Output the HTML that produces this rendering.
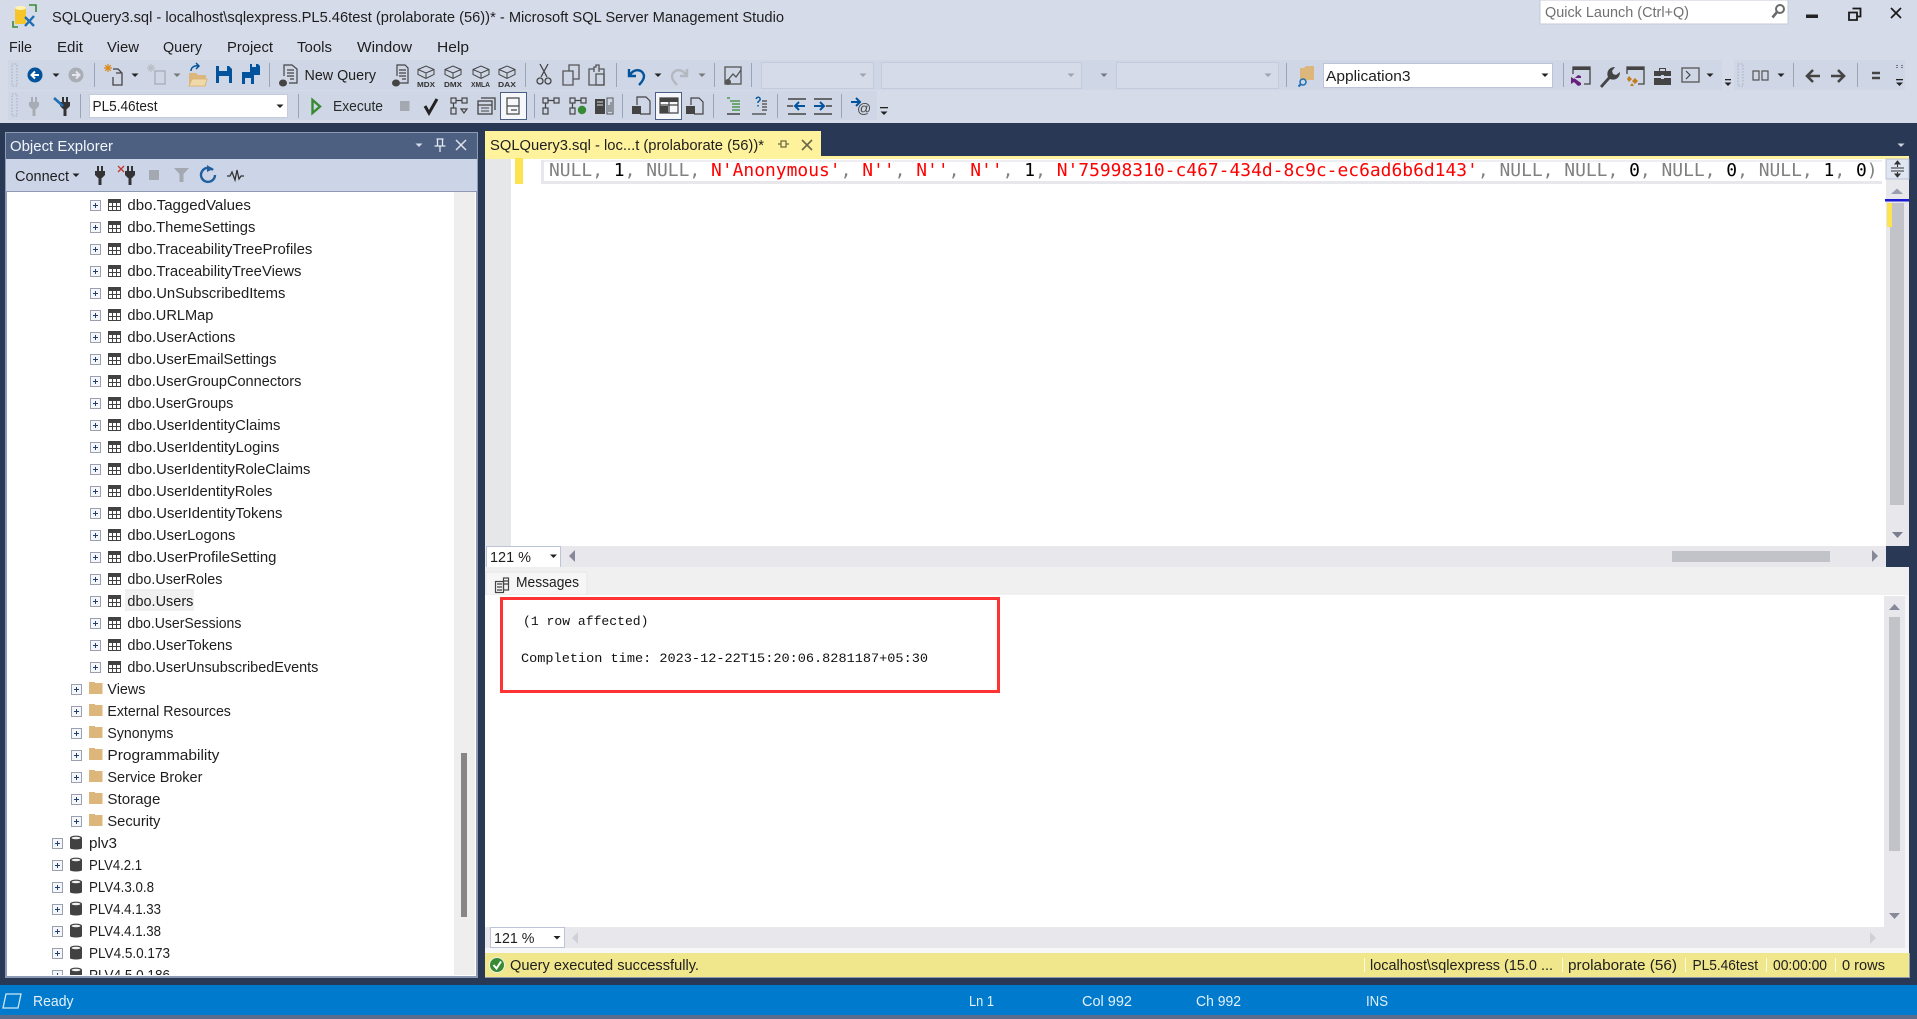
<!DOCTYPE html>
<html lang="en"><head><meta charset="utf-8"><title>SSMS</title>
<style>
html,body{margin:0;padding:0;width:1917px;height:1019px;overflow:hidden;background:#293955}
svg{display:block;position:absolute;left:0;top:0}
text{font-family:"Liberation Sans",sans-serif;font-size:15px;fill:#1e1e1e;white-space:pre}
.mono{font-family:"DejaVu Sans Mono",monospace;font-size:17.94px}
.msg{font-family:"Liberation Mono",monospace;font-size:13.3px;fill:#111}
.w{fill:#e4f1fb}
.tiny{font-family:"Liberation Sans",sans-serif;font-size:7.5px;font-weight:bold;fill:#333}
#rows text{transform:translateX(-.6px)}
</style></head><body>
<svg width="1917" height="1019" viewBox="0 0 1917 1019" xmlns="http://www.w3.org/2000/svg">
<defs>
<g id="exp"><rect x=".5" y=".5" width="10" height="10" fill="#f5f6fa" stroke="#9aa0ad"/><path d="M3 5.500h5M5.500 3v5" stroke="#1f3f73" stroke-width="1"/></g>
<g id="tbl"><rect x="0" y="0" width="13" height="12" fill="#fff"/><rect x="0" y="0" width="13" height="3" fill="#424242"/><path d="M.5 0v12M4.500 0v12M8.500 0v12M12.500 0v12M0 .5h13M0 3.500h13M0 7.500h13M0 11.500h13" stroke="#424242" stroke-width="1" fill="none"/></g>
<g id="fld"><rect x="0" y="1" width="13.500" height="11" fill="#dcb67a"/><rect x="0" y="0" width="6" height="2" fill="#dcb67a"/></g>
<g id="db"><path d="M0 3v10c0 2 12 2 12 0V3z" fill="#424242"/><ellipse cx="6" cy="3" rx="6" ry="2.400" fill="#424242"/><ellipse cx="6" cy="3" rx="4.400" ry="1.300" fill="#f2f2f2"/></g>
<path id="dd" d="M-3.500 -1.500h7l-3.500 3.500z"/>
<g id="sep"><rect width="1" height="24" fill="#9aa4b8"/></g>
<g id="cube"><path d="M1 4.500l8-3.500 8 3.500v5l-8 4-8-4zM1 4.500l8 3.500 8-3.500M9 8v5.500" fill="none" stroke="#444" stroke-width="1"/></g>
<g id="plug"><path d="M3 0v5M7 0v5" stroke="currentColor" stroke-width="2"/><path d="M0 5h10v4l-3 3H6.500v7h-3v-7H3L0 9z" fill="currentColor"/></g>
<clipPath id="tc"><rect x="7" y="192" width="447" height="783"/></clipPath>
</defs>

<!-- base -->
<rect width="1917" height="123" fill="#d6dbe9"/>
<rect y="123" width="1917" height="862" fill="#293955"/>

<!-- title -->
<path d="M13 21v6h5M29 5h7v7" stroke="#388a34" stroke-width="1.600" fill="none"/>
<path d="M15 8h11v16H15z" fill="#f5c52a"/><ellipse cx="20.500" cy="8" rx="5.500" ry="2" fill="#fff3b0"/>
<path d="M25 17l9 9M34 16l-9 10" stroke="#1f6fb5" stroke-width="2.400"/>
<text x="52" y="22" textLength="732" lengthAdjust="spacingAndGlyphs">SQLQuery3.sql - localhost\sqlexpress.PL5.46test (prolaborate (56))* - Microsoft SQL Server Management Studio</text>
<rect x="1540" y="0" width="248" height="24" fill="#fff" stroke="#c4cad8"/>
<text x="1545" y="17" textLength="144" lengthAdjust="spacingAndGlyphs" style="fill:#717171">Quick Launch (Ctrl+Q)</text>
<circle cx="1780" cy="9" r="4" fill="none" stroke="#6a6a6a" stroke-width="2"/><path d="M1777 12l-4.500 5.500" stroke="#6a6a6a" stroke-width="2.600"/>
<rect x="1806" y="14.500" width="12" height="3.500" fill="#222"/>
<path d="M1852.500 8.500h8v8h-3M1849 12.500h8v7.500h-8z" fill="#d6dbe9" stroke="#1a1a1a" stroke-width="1.800"/>
<path d="M1891 8l10 10M1901 8l-10 10" stroke="#1a1a1a" stroke-width="1.700"/>

<!-- menu -->
<g>
<text x="9" y="52" textLength="23" lengthAdjust="spacingAndGlyphs">File</text>
<text x="57" y="52" textLength="26" lengthAdjust="spacingAndGlyphs">Edit</text>
<text x="107" y="52" textLength="32" lengthAdjust="spacingAndGlyphs">View</text>
<text x="163" y="52" textLength="39" lengthAdjust="spacingAndGlyphs">Query</text>
<text x="227" y="52" textLength="46" lengthAdjust="spacingAndGlyphs">Project</text>
<text x="297" y="52" textLength="35" lengthAdjust="spacingAndGlyphs">Tools</text>
<text x="357" y="52" textLength="55" lengthAdjust="spacingAndGlyphs">Window</text>
<text x="437" y="52" textLength="32" lengthAdjust="spacingAndGlyphs">Help</text>
</g>

<!-- toolbar backgrounds -->
<rect x="8" y="60" width="1897" height="30" fill="#cfd6e5"/>
<rect x="8" y="91" width="869" height="29" fill="#cfd6e5"/>
<rect x="1722" y="60" width="12" height="30" fill="#d6dbe9"/>
<path d="M12 64h5v22h-5zM12 94h5v22h-5zM1738 64h5v22h-5z" fill="none" stroke="#a8afc0" stroke-width="1" stroke-dasharray="1.500 1.500"/>

<!-- toolbar 1 left -->
<circle cx="35" cy="75" r="7.500" fill="#00539c"/><path d="M39 75h-7M35 71.500l-3.500 3.500 3.500 3.500" stroke="#fff" stroke-width="2" fill="none"/>
<use href="#dd" x="56" y="75" fill="#222"/>
<circle cx="76" cy="75" r="7.500" fill="#a9adb5"/><path d="M72 75h7M76 71.500l3.500 3.500-3.500 3.500" stroke="#e4e6ec" stroke-width="2" fill="none"/>
<use href="#sep" x="94" y="63"/>
<g fill="none"><path d="M113 69h5l4 4v12h-9V77M116 73h5" stroke="#444" stroke-width="1.300"/><path d="M108 64v8M104 68h8M105.200 65.200l5.600 5.600M110.800 65.200l-5.600 5.600" stroke="#d98a1a" stroke-width="1.200"/></g>
<use href="#dd" x="135" y="75" fill="#222"/>
<g fill="none"><rect x="155" y="71" width="10" height="13" stroke="#a8acb4" stroke-width="1.300"/><path d="M151 64v8M147 68h8M148.200 65.200l5.600 5.600M153.800 65.200l-5.600 5.600" stroke="#b8bcc4" stroke-width="1.200"/></g>
<use href="#dd" x="177" y="75" fill="#777"/>
<path d="M189 73h7l2 2h8v11h-17z" fill="#dcb67a"/><path d="M189 86l3-7h15l-2 7z" fill="#efd9a8" stroke="#dcb67a"/><path d="M191 71c0-4 4-6 8-5M196 63l3 3-3 3" stroke="#00539c" stroke-width="1.500" fill="none"/>
<path d="M216 66h13l3 3v14h-16z" fill="#00539c"/><rect x="219" y="66" width="8" height="5" fill="#cfd6e5"/><rect x="219" y="76" width="10" height="7" fill="#cfd6e5"/>
<path d="M250 64h8l2 2v9h-10z" fill="#00539c"/><path d="M242 72h10l2 2v10h-12z" fill="#00539c"/><rect x="245" y="78" width="6" height="6" fill="#cfd6e5"/><rect x="252" y="64" width="4" height="3" fill="#cfd6e5"/>
<use href="#sep" x="269" y="63"/>
<g fill="none" stroke="#444" stroke-width="1.200"><path d="M284 76V65h8l5 4v14h-8"/><path d="M287 70h7M287 73h7M287 76h7M290 79h4"/></g><ellipse cx="283" cy="83" rx="4" ry="3.500" fill="#444"/>
<text x="304.500" y="80" textLength="71.500" lengthAdjust="spacingAndGlyphs">New Query</text>
<g fill="none" stroke="#444" stroke-width="1.200"><path d="M397 76V65h8l3 3v15h-8"/><path d="M399 70h7M399 73h7M399 76h7M402 79h4"/></g><ellipse cx="396" cy="83" rx="4" ry="3.500" fill="#444"/>
<use href="#cube" x="417" y="65"/><text class="tiny" x="417" y="87" textLength="18" lengthAdjust="spacingAndGlyphs">MDX</text>
<use href="#cube" x="444" y="65"/><text class="tiny" x="444" y="87" textLength="18" lengthAdjust="spacingAndGlyphs">DMX</text>
<use href="#cube" x="472" y="65"/><text class="tiny" x="471" y="87" textLength="19" lengthAdjust="spacingAndGlyphs">XMLA</text>
<use href="#cube" x="498" y="65"/><text class="tiny" x="498" y="87" textLength="18" lengthAdjust="spacingAndGlyphs">DAX</text>
<use href="#sep" x="525" y="63"/>
<g fill="none" stroke="#444" stroke-width="1.300"><path d="M540 64l7 13M548 64l-7 13"/><circle cx="540" cy="81" r="3"/><circle cx="548" cy="81" r="3"/></g>
<g fill="#cfd6e5" stroke="#555" stroke-width="1.300"><path d="M569 65h10v14h-10z"/><path d="M563 71h10v14h-10z"/></g>
<g fill="none" stroke="#555" stroke-width="1.300"><path d="M594 69h-5v16h15V69h-5"/><path d="M594 72v-5h2v-2h3v7M596 74h8v11h-8z"/></g>
<use href="#sep" x="616" y="63"/>
<path d="M629 69v7h7M630 75c4-7 13-6 14 1 0 4-3 7-5 9" fill="none" stroke="#00539c" stroke-width="2.400"/>
<use href="#dd" x="658" y="75" fill="#222"/>
<path d="M687 69v7h-7M686 75c-4-7-13-6-14 1 0 4 3 7 5 9" fill="none" stroke="#b4b8c0" stroke-width="2.400"/>
<use href="#dd" x="702" y="75" fill="#777"/>
<use href="#sep" x="714" y="63"/>
<g fill="none" stroke="#555" stroke-width="1.300"><rect x="725" y="67" width="16" height="17"/><path d="M728 80l5-6 3 3 5-7"/></g><circle cx="728" cy="82" r="3" fill="#555"/>
<use href="#sep" x="751" y="63"/>

<!-- disabled combos -->
<rect x="761.500" y="62.500" width="112" height="26" fill="#d6dbe9" stroke="#c3cbdc"/><use href="#dd" x="863" y="75" fill="#9ba3b3"/>
<rect x="881.500" y="62.500" width="200" height="26" fill="#d6dbe9" stroke="#c3cbdc"/><use href="#dd" x="1071" y="75" fill="#9ba3b3"/>
<use href="#dd" x="1104" y="75" fill="#717782"/>
<rect x="1116.500" y="62.500" width="162" height="26" fill="#d6dbe9" stroke="#c3cbdc"/><use href="#dd" x="1268" y="75" fill="#9ba3b3"/>
<use href="#sep" x="1286" y="63"/>

<!-- application combo -->
<path d="M1300 68h4l2-2h8v14h-14z" fill="#dcb67a"/><circle cx="1303" cy="82" r="3" fill="none" stroke="#1f6fb5" stroke-width="1.500"/><path d="M1300.500 84.500l-2 2" stroke="#1f6fb5" stroke-width="2"/>
<rect x="1323.500" y="63.500" width="229" height="24" fill="#fff" stroke="#bcc4d8"/>
<text x="1326" y="81" textLength="84.500" lengthAdjust="spacingAndGlyphs">Application3</text>
<use href="#dd" x="1545" y="75" fill="#222"/>
<use href="#sep" x="1563" y="63"/>
<g fill="none" stroke="#444" stroke-width="1.300"><path d="M1573 74v-7h17v17h-6"/><path d="M1573 68.500h17" stroke-width="3"/></g><path d="M1574 78l7 5v2l-3 1-4-4-3 2v-7l3 2 4-4 3 1v2z" fill="#68217a"/>
<path d="M1600 86l8-9c-2-5 1-10 7-10l-3 4 1 3 3 1 4-3c0 6-5 9-10 7l-8 9z" fill="#444"/>
<g fill="none" stroke="#444" stroke-width="1.300"><path d="M1627 74v-7h17v17h-6"/><path d="M1627 68.500h17" stroke-width="3"/></g><path d="M1629 76l3 3-3 3-2-3zM1635 78l3 3-3 3-3-3zM1632 83l2 3h-4z" fill="#c27d1a"/>
<path d="M1659 71v-3h7v3M1654 71h17v5h-17zM1654 78h17v7h-17z" fill="#444"/><path d="M1660 71v-2h5v2" fill="#cfd6e5"/><rect x="1661" y="75" width="3" height="4" fill="#cfd6e5"/>
<rect x="1682" y="68" width="17" height="14" fill="none" stroke="#555" stroke-width="1.300"/><path d="M1686 71l4 4-4 4" fill="none" stroke="#444" stroke-width="1.200"/>
<use href="#dd" x="1710" y="75" fill="#222"/>
<rect x="1725" y="79" width="6" height="1.300" fill="#222"/><use href="#dd" x="1728" y="84" fill="#222"/>
<g fill="none" stroke="#555" stroke-width="1.200"><path d="M1753 71h6v9h-6zM1762 71h6v9h-6z"/></g>
<use href="#dd" x="1781" y="75" fill="#222"/>
<use href="#sep" x="1793" y="63"/>
<path d="M1820 76h-12M1813 70l-6 6 6 6" fill="none" stroke="#444" stroke-width="2.600"/>
<path d="M1831 76h12M1838 70l6 6-6 6" fill="none" stroke="#444" stroke-width="2.600"/>
<use href="#sep" x="1857" y="63"/>
<path d="M1872 73h8M1872 78h8" stroke="#444" stroke-width="2.600"/>
<path d="M1897 65v4M1902 65v4" stroke="#444" stroke-width="1.300" stroke-dasharray="1 1"/>
<rect x="1896" y="79" width="7" height="1.300" fill="#222"/><use href="#dd" x="1899.500" y="84" fill="#222"/>

<!-- toolbar 2 -->
<g color="#a8acb4" transform="translate(29,97)"><use href="#plug"/></g>
<g color="#333" transform="translate(60,97)"><use href="#plug"/></g>
<path d="M54 98l9 8" stroke="#1f6fb5" stroke-width="2.600"/>
<use href="#sep" x="80" y="94"/>
<rect x="89.500" y="94.500" width="198" height="23" fill="#fff" stroke="#c4cbdd"/>
<text x="92.500" y="111" textLength="65" lengthAdjust="spacingAndGlyphs">PL5.46test</text>
<use href="#dd" x="280" y="106" fill="#222"/>
<use href="#sep" x="298" y="94"/>
<path d="M312.500 100v13l7.500-6.500z" fill="none" stroke="#388a34" stroke-width="2.400"/>
<text x="333" y="111" textLength="50" lengthAdjust="spacingAndGlyphs" style="fill:#2a2a2a">Execute</text>
<rect x="400" y="101" width="9.500" height="10" fill="#a4a8b0"/>
<path d="M425 106l4 7 8-14" fill="none" stroke="#222" stroke-width="3"/>
<g fill="none" stroke="#444" stroke-width="1.200"><rect x="451" y="98" width="5" height="5"/><rect x="462" y="98" width="5" height="5"/><path d="M456 100.500h6M453.500 103v5"/><rect x="451" y="108" width="5" height="6"/><path d="M461 109h6l-3 4z"/></g>
<g fill="none" stroke="#444" stroke-width="1.300"><rect x="478" y="101" width="14" height="13"/><path d="M481 98h14v12M478 105h14"/><path d="M481 108h8M481 111h8" stroke-width="1"/></g>
<rect x="500.500" y="92.500" width="26" height="27" fill="#f6f7fa" stroke="#4a5f85"/>
<g fill="none" stroke="#444" stroke-width="1.200"><rect x="507" y="98" width="12" height="16"/><path d="M507 106h12M511 110h6"/></g>
<use href="#sep" x="534" y="94"/>
<g fill="none" stroke="#444" stroke-width="1.200"><rect x="543" y="98" width="5" height="5"/><rect x="554" y="98" width="5" height="5"/><path d="M548 100.500h6M545.500 103v5"/><rect x="543" y="108" width="5" height="6"/></g>
<g fill="none" stroke="#444" stroke-width="1.200"><rect x="570" y="98" width="5" height="5"/><rect x="581" y="98" width="5" height="5"/><path d="M575 100.500h6M572.500 103v5"/><rect x="570" y="108" width="5" height="6"/></g><circle cx="582" cy="110" r="4.200" fill="#388a34"/>
<g><rect x="595" y="99" width="10" height="15" fill="#444"/><path d="M597 102h6M597 105h6" stroke="#ddd"/><path d="M607 98h6v16h-6zM609 105v7M611 102v10" fill="none" stroke="#555"/></g>
<use href="#sep" x="622" y="94"/>
<g fill="none" stroke="#444" stroke-width="1.200"><path d="M637 105V97h9l4 4v13h-10"/></g><rect x="632" y="106" width="9" height="8" fill="#444"/>
<rect x="655.500" y="92.500" width="26" height="27" fill="#f6f7fa" stroke="#4a5f85"/>
<g><rect x="660" y="98" width="18" height="4" fill="#444"/><path d="M660 98h18v15h-18zM660 105h18M669 98v15" fill="none" stroke="#444" stroke-width="1.200"/><rect x="660" y="106" width="8" height="7" fill="#444"/></g>
<g fill="none" stroke="#444" stroke-width="1.200"><path d="M691 105V98h8l4 4v12h-9"/></g><rect x="686" y="106" width="9" height="8" fill="#444"/>
<use href="#sep" x="713" y="94"/>
<path d="M727 98h3M730 101h10M732 104h8M732 107h8M732 110h8" stroke="#388a34" stroke-width="1.300"/><path d="M727 114h13" stroke="#444" stroke-width="1.500"/>
<path d="M756 99c1-3 5-2 4 1l-2 2v1M758 105v1.500" stroke="#00539c" stroke-width="1.400" fill="none"/><path d="M762 101h5M762 104h5M762 107h5M762 110h5M752 114h14" stroke="#444" stroke-width="1.200"/>
<use href="#sep" x="777" y="94"/>
<path d="M788 99h18M788 114h18M787 106h6" stroke="#444" stroke-width="1.500"/><path d="M805 106h-10M799 102l-4 4 4 4" stroke="#00539c" stroke-width="2" fill="none"/>
<path d="M814 99h18M814 114h18M826 106h6" stroke="#444" stroke-width="1.500"/><path d="M814 106h10M820 102l4 4-4 4" stroke="#00539c" stroke-width="2" fill="none"/>
<use href="#sep" x="841" y="94"/>
<path d="M851 102h9M856 98l4 4-4 4" stroke="#00539c" stroke-width="2" fill="none"/>
<text x="857" y="113" style="font-size:14px;fill:#444">@</text>
<rect x="880" y="107" width="8" height="1.300" fill="#222"/><use href="#dd" x="884" y="113" fill="#222"/>

<!-- object explorer -->
<rect x="5" y="132" width="473" height="846" fill="#8e99b3"/>
<rect x="6" y="133" width="471" height="26" fill="#4d6082"/>
<text x="10" y="151" textLength="103" lengthAdjust="spacingAndGlyphs" style="fill:#f2f5fa">Object Explorer</text>
<use href="#dd" x="419" y="145" fill="#d6dbe9"/>
<path d="M436.500 139h7M437.500 139v7h5v-7M434.500 146h11M440 146v6" fill="none" stroke="#e4e8f0" stroke-width="1.300"/>
<path d="M456 140l10 10M466 140l-10 10" stroke="#dfe3ec" stroke-width="1.500"/>
<rect x="6" y="159" width="471" height="32" fill="#ccd5e8"/>
<text x="15" y="181" textLength="54" lengthAdjust="spacingAndGlyphs">Connect</text>
<use href="#dd" x="76" y="175" fill="#222"/>
<g color="#333" transform="translate(95,166)"><use href="#plug"/></g>
<g color="#333" transform="translate(125,166)"><use href="#plug"/></g>
<path d="M118 166l6 6M124 166l-6 6" stroke="#c0392b" stroke-width="1.300"/>
<rect x="149" y="170" width="10" height="10" fill="#a4a8b0"/>
<path d="M174 168h15l-5.500 6v8h-4v-8z" fill="#a4a8b0"/>
<path d="M213 170a7 7 0 1 0 2 5" fill="none" stroke="#1f5f9e" stroke-width="2.400"/><path d="M207 165l6 4-6 3z" fill="#1f5f9e"/>
<path d="M227 176h3l2-4 3 8 2-10 2 9 2-3h3" fill="none" stroke="#333" stroke-width="1.300"/>

<rect x="7" y="192" width="469" height="784" fill="#fff"/>
<rect x="454" y="192" width="21" height="783" fill="#eee"/>
<rect x="461" y="753" width="6" height="164" fill="#868686"/>
<rect x="125" y="589" width="69" height="22" fill="#f0f0f0"/>

<g clip-path="url(#tc)">
<g id="rows">
<use href="#exp" x="90" y="200"/><use href="#tbl" x="108" y="199"/><text x="128" y="210" textLength="123.500" lengthAdjust="spacingAndGlyphs">dbo.TaggedValues</text>
<use href="#exp" x="90" y="222"/><use href="#tbl" x="108" y="221"/><text x="128" y="232" textLength="128" lengthAdjust="spacingAndGlyphs">dbo.ThemeSettings</text>
<use href="#exp" x="90" y="244"/><use href="#tbl" x="108" y="243"/><text x="128" y="254" textLength="185" lengthAdjust="spacingAndGlyphs">dbo.TraceabilityTreeProfiles</text>
<use href="#exp" x="90" y="266"/><use href="#tbl" x="108" y="265"/><text x="128" y="276" textLength="174" lengthAdjust="spacingAndGlyphs">dbo.TraceabilityTreeViews</text>
<use href="#exp" x="90" y="288"/><use href="#tbl" x="108" y="287"/><text x="128" y="298" textLength="158" lengthAdjust="spacingAndGlyphs">dbo.UnSubscribedItems</text>
<use href="#exp" x="90" y="310"/><use href="#tbl" x="108" y="309"/><text x="128" y="320" textLength="86" lengthAdjust="spacingAndGlyphs">dbo.URLMap</text>
<use href="#exp" x="90" y="332"/><use href="#tbl" x="108" y="331"/><text x="128" y="342" textLength="108" lengthAdjust="spacingAndGlyphs">dbo.UserActions</text>
<use href="#exp" x="90" y="354"/><use href="#tbl" x="108" y="353"/><text x="128" y="364" textLength="149" lengthAdjust="spacingAndGlyphs">dbo.UserEmailSettings</text>
<use href="#exp" x="90" y="376"/><use href="#tbl" x="108" y="375"/><text x="128" y="386" textLength="174" lengthAdjust="spacingAndGlyphs">dbo.UserGroupConnectors</text>
<use href="#exp" x="90" y="398"/><use href="#tbl" x="108" y="397"/><text x="128" y="408" textLength="106" lengthAdjust="spacingAndGlyphs">dbo.UserGroups</text>
<use href="#exp" x="90" y="420"/><use href="#tbl" x="108" y="419"/><text x="128" y="430" textLength="153" lengthAdjust="spacingAndGlyphs">dbo.UserIdentityClaims</text>
<use href="#exp" x="90" y="442"/><use href="#tbl" x="108" y="441"/><text x="128" y="452" textLength="152" lengthAdjust="spacingAndGlyphs">dbo.UserIdentityLogins</text>
<use href="#exp" x="90" y="464"/><use href="#tbl" x="108" y="463"/><text x="128" y="474" textLength="183" lengthAdjust="spacingAndGlyphs">dbo.UserIdentityRoleClaims</text>
<use href="#exp" x="90" y="486"/><use href="#tbl" x="108" y="485"/><text x="128" y="496" textLength="145" lengthAdjust="spacingAndGlyphs">dbo.UserIdentityRoles</text>
<use href="#exp" x="90" y="508"/><use href="#tbl" x="108" y="507"/><text x="128" y="518" textLength="155" lengthAdjust="spacingAndGlyphs">dbo.UserIdentityTokens</text>
<use href="#exp" x="90" y="530"/><use href="#tbl" x="108" y="529"/><text x="128" y="540" textLength="108" lengthAdjust="spacingAndGlyphs">dbo.UserLogons</text>
<use href="#exp" x="90" y="552"/><use href="#tbl" x="108" y="551"/><text x="128" y="562" textLength="149" lengthAdjust="spacingAndGlyphs">dbo.UserProfileSetting</text>
<use href="#exp" x="90" y="574"/><use href="#tbl" x="108" y="573"/><text x="128" y="584" textLength="95" lengthAdjust="spacingAndGlyphs">dbo.UserRoles</text>
<use href="#exp" x="90" y="596"/><use href="#tbl" x="108" y="595"/><text x="128" y="606" textLength="66" lengthAdjust="spacingAndGlyphs">dbo.Users</text>
<use href="#exp" x="90" y="618"/><use href="#tbl" x="108" y="617"/><text x="128" y="628" textLength="114" lengthAdjust="spacingAndGlyphs">dbo.UserSessions</text>
<use href="#exp" x="90" y="640"/><use href="#tbl" x="108" y="639"/><text x="128" y="650" textLength="105" lengthAdjust="spacingAndGlyphs">dbo.UserTokens</text>
<use href="#exp" x="90" y="662"/><use href="#tbl" x="108" y="661"/><text x="128" y="672" textLength="191" lengthAdjust="spacingAndGlyphs">dbo.UserUnsubscribedEvents</text>

<use href="#exp" x="71" y="684"/><use href="#fld" x="89" y="682"/><text x="108" y="694" textLength="38" lengthAdjust="spacingAndGlyphs">Views</text>
<use href="#exp" x="71" y="706"/><use href="#fld" x="89" y="704"/><text x="108" y="716" textLength="123.500" lengthAdjust="spacingAndGlyphs">External Resources</text>
<use href="#exp" x="71" y="728"/><use href="#fld" x="89" y="726"/><text x="108" y="738" textLength="66" lengthAdjust="spacingAndGlyphs">Synonyms</text>
<use href="#exp" x="71" y="750"/><use href="#fld" x="89" y="748"/><text x="108" y="760" textLength="112" lengthAdjust="spacingAndGlyphs">Programmability</text>
<use href="#exp" x="71" y="772"/><use href="#fld" x="89" y="770"/><text x="108" y="782" textLength="95" lengthAdjust="spacingAndGlyphs">Service Broker</text>
<use href="#exp" x="71" y="794"/><use href="#fld" x="89" y="792"/><text x="108" y="804" textLength="53" lengthAdjust="spacingAndGlyphs">Storage</text>
<use href="#exp" x="71" y="816"/><use href="#fld" x="89" y="814"/><text x="108" y="826" textLength="53" lengthAdjust="spacingAndGlyphs">Security</text>

<use href="#exp" x="52" y="838"/><use href="#db" x="70" y="835"/><text x="89.600" y="848" textLength="28" lengthAdjust="spacingAndGlyphs">plv3</text>
<use href="#exp" x="52" y="860"/><use href="#db" x="70" y="857"/><text x="89.600" y="870" textLength="53" lengthAdjust="spacingAndGlyphs">PLV4.2.1</text>
<use href="#exp" x="52" y="882"/><use href="#db" x="70" y="879"/><text x="89.600" y="892" textLength="65" lengthAdjust="spacingAndGlyphs">PLV4.3.0.8</text>
<use href="#exp" x="52" y="904"/><use href="#db" x="70" y="901"/><text x="89.600" y="914" textLength="72" lengthAdjust="spacingAndGlyphs">PLV4.4.1.33</text>
<use href="#exp" x="52" y="926"/><use href="#db" x="70" y="923"/><text x="89.600" y="936" textLength="72" lengthAdjust="spacingAndGlyphs">PLV4.4.1.38</text>
<use href="#exp" x="52" y="948"/><use href="#db" x="70" y="945"/><text x="89.600" y="958" textLength="81" lengthAdjust="spacingAndGlyphs">PLV4.5.0.173</text>
<use href="#exp" x="52" y="970"/><use href="#db" x="70" y="967"/><text x="89.600" y="980" textLength="81" lengthAdjust="spacingAndGlyphs">PLV4.5.0.186</text>
</g>
</g>

<!-- document tab -->
<rect x="485" y="131" width="336" height="25" fill="#fff29d"/>
<rect x="485" y="156" width="1424" height="3" fill="#fff29d"/>
<text x="490" y="150" textLength="274" lengthAdjust="spacingAndGlyphs">SQLQuery3.sql - loc...t (prolaborate (56))*</text>
<path d="M781 141v6h5v-6zM781 144h-3M786 144h3" fill="none" stroke="#6a6648" stroke-width="1.200"/>
<path d="M802 140l10 10M812 140l-10 10" stroke="#6a6648" stroke-width="1.600"/>
<use href="#dd" x="1901" y="145" fill="#ced4dd"/>

<!-- editor -->
<rect x="485" y="159" width="1424" height="387" fill="#fff"/>
<rect x="485" y="159" width="26" height="387" fill="#e6e7e8"/>
<rect x="515" y="158" width="8" height="26" fill="#fee351"/>
<rect x="541" y="160" width="1341" height="2" fill="#eeeef2"/>
<rect x="541" y="181" width="1341" height="3" fill="#e8e8ec"/>
<rect x="541" y="160" width="3" height="24" fill="#e8e8ec"/>
<text class="mono" x="549" y="176" style="fill:#808080"><tspan>NULL, </tspan><tspan style="fill:#000">1</tspan><tspan>, NULL, </tspan><tspan style="fill:#f00">N'Anonymous'</tspan><tspan>, </tspan><tspan style="fill:#f00">N''</tspan><tspan>, </tspan><tspan style="fill:#f00">N''</tspan><tspan>, </tspan><tspan style="fill:#f00">N''</tspan><tspan>, </tspan><tspan style="fill:#000">1</tspan><tspan>, </tspan><tspan style="fill:#f00">N'75998310-c467-434d-8c9c-ec6ad6b6d143'</tspan><tspan>, NULL, NULL, </tspan><tspan style="fill:#000">0</tspan><tspan>, NULL, </tspan><tspan style="fill:#000">0</tspan><tspan>, NULL, </tspan><tspan style="fill:#000">1</tspan><tspan>, </tspan><tspan style="fill:#000">0</tspan><tspan>)</tspan></text>
<!-- editor vscroll -->
<rect x="1886" y="179" width="23" height="367" fill="#e8e8ec"/>
<rect x="1886" y="159" width="23" height="20" fill="#dfe6f2" stroke="#b0bbd0" stroke-width=".8"/>
<path d="M1891 168h13M1891 171h13M1897.500 161l-2.500 3h5zM1897.500 177l-2.500-3h5zM1897.500 164v3M1897.500 172v3" stroke="#333" stroke-width="1" fill="#333"/>
<path d="M1891 194l6-5.500 6 5.500z" fill="#9a9fb0"/>
<rect x="1885" y="199" width="24" height="2.500" fill="#1b1bd1"/>
<rect x="1890" y="203" width="14" height="302" fill="#c2c3c9"/>
<rect x="1887" y="203" width="5" height="24" fill="#fee351"/>
<path d="M1892 532h11l-5.500 6z" fill="#7a7e8f"/>

<!-- editor hscroll -->
<rect x="485" y="546" width="1401" height="21" fill="#e8e8ec"/>
<rect x="486.500" y="546.500" width="74" height="21" fill="#fff" stroke="#bcc4d8"/>
<text x="490" y="562" textLength="41" lengthAdjust="spacingAndGlyphs">121 %</text>
<use href="#dd" x="553.500" y="556" fill="#222"/>
<path d="M575 550v12l-6-6z" fill="#868999"/>
<rect x="1672" y="551" width="158" height="11" fill="#c2c3c9"/>
<path d="M1872 550v12l6-6z" fill="#868999"/>

<!-- messages tab strip -->
<rect x="485" y="567" width="1424" height="28" fill="#f0f0f0"/>
<rect x="486" y="572" width="101" height="23" fill="#f6f6f6" stroke="#e6e6e6"/>
<g fill="none" stroke="#444" stroke-width="1.200"><rect x="495.500" y="581.500" width="8" height="11" fill="#f6f6f6"/><path d="M497 584h5M497 587h5M497 590h5"/><rect x="503.500" y="578" width="5" height="12"/><path d="M504 581h4M504 584h4"/></g>
<text x="516" y="587" textLength="63" lengthAdjust="spacingAndGlyphs">Messages</text>

<!-- results -->
<rect x="485" y="595" width="1424" height="353" fill="#fff"/>
<rect x="1905" y="595" width="4" height="358" fill="#f5f5f5"/>
<rect x="1884" y="596" width="21" height="352" fill="#e8e8ec"/>
<path d="M1889 610l5.500-6 5.500 6z" fill="#868999"/>
<rect x="1889" y="617" width="11" height="234" fill="#c2c3c9"/>
<path d="M1889 913h11l-5.500 6z" fill="#868999"/>
<rect x="501.500" y="598.500" width="497" height="93" fill="none" stroke="#ff3333" stroke-width="3"/>
<text class="msg" x="523" y="625" textLength="125.500" lengthAdjust="spacingAndGlyphs">(1 row affected)</text>
<text class="msg" x="521" y="662" textLength="407" lengthAdjust="spacingAndGlyphs">Completion time: 2023-12-22T15:20:06.8281187+05:30</text>

<!-- results hscroll -->
<rect x="485" y="927" width="1420" height="21" fill="#e8e8ec"/>
<rect x="490.500" y="927.500" width="74" height="20" fill="#fff" stroke="#bcc4d8"/>
<text x="494" y="943" textLength="40.500" lengthAdjust="spacingAndGlyphs">121 %</text>
<use href="#dd" x="557" y="937.500" fill="#222"/>
<path d="M578 932v12l-6-6z" fill="#d0d1d8"/>
<path d="M1870 932v12l6-6z" fill="#d0d1d8"/>
<rect x="485" y="948" width="1424" height="5" fill="#f7f7f7"/>

<!-- query status bar -->
<rect x="485" y="953" width="1425" height="24" fill="#f0e68c"/>
<rect x="485" y="977" width="1425" height="1" fill="#8e99b3"/>
<rect x="1909" y="953" width="1" height="25" fill="#8e99b3"/>
<circle cx="497" cy="965" r="7.500" fill="#388a34" stroke="#e8f2e8" stroke-width="1"/><path d="M493.500 965l3 3.500 4.500-7" fill="none" stroke="#fff" stroke-width="2"/>
<text x="510" y="970" textLength="189" lengthAdjust="spacingAndGlyphs">Query executed successfully.</text>
<path d="M1364.500 958v14M1562.500 958v14M1685.500 958v14M1766.500 958v14M1835.500 958v14" stroke="#fffbe0" stroke-width="1"/>
<text x="1370" y="970" textLength="183" lengthAdjust="spacingAndGlyphs">localhost\sqlexpress (15.0 ...</text>
<text x="1568" y="970" textLength="109" lengthAdjust="spacingAndGlyphs">prolaborate (56)</text>
<text x="1692.500" y="970" textLength="65.500" lengthAdjust="spacingAndGlyphs">PL5.46test</text>
<text x="1773" y="970" textLength="54" lengthAdjust="spacingAndGlyphs">00:00:00</text>
<text x="1842" y="970" textLength="43" lengthAdjust="spacingAndGlyphs">0 rows</text>

<!-- app status bar -->
<rect x="0" y="985" width="1917" height="30" fill="#007acc"/>
<rect x="0" y="1015" width="1917" height="4" fill="#5a6d8c"/>
<path d="M6 994h15l-3 14H3z" fill="none" stroke="#cfe6f6" stroke-width="1.300"/>
<text class="w" x="33" y="1006" textLength="40.500" lengthAdjust="spacingAndGlyphs">Ready</text>
<text class="w" x="969" y="1006" textLength="25" lengthAdjust="spacingAndGlyphs">Ln 1</text>
<text class="w" x="1082" y="1006" textLength="50" lengthAdjust="spacingAndGlyphs">Col 992</text>
<text class="w" x="1196" y="1006" textLength="45" lengthAdjust="spacingAndGlyphs">Ch 992</text>
<text class="w" x="1366" y="1006" textLength="22" lengthAdjust="spacingAndGlyphs">INS</text>
</svg>
</body></html>
